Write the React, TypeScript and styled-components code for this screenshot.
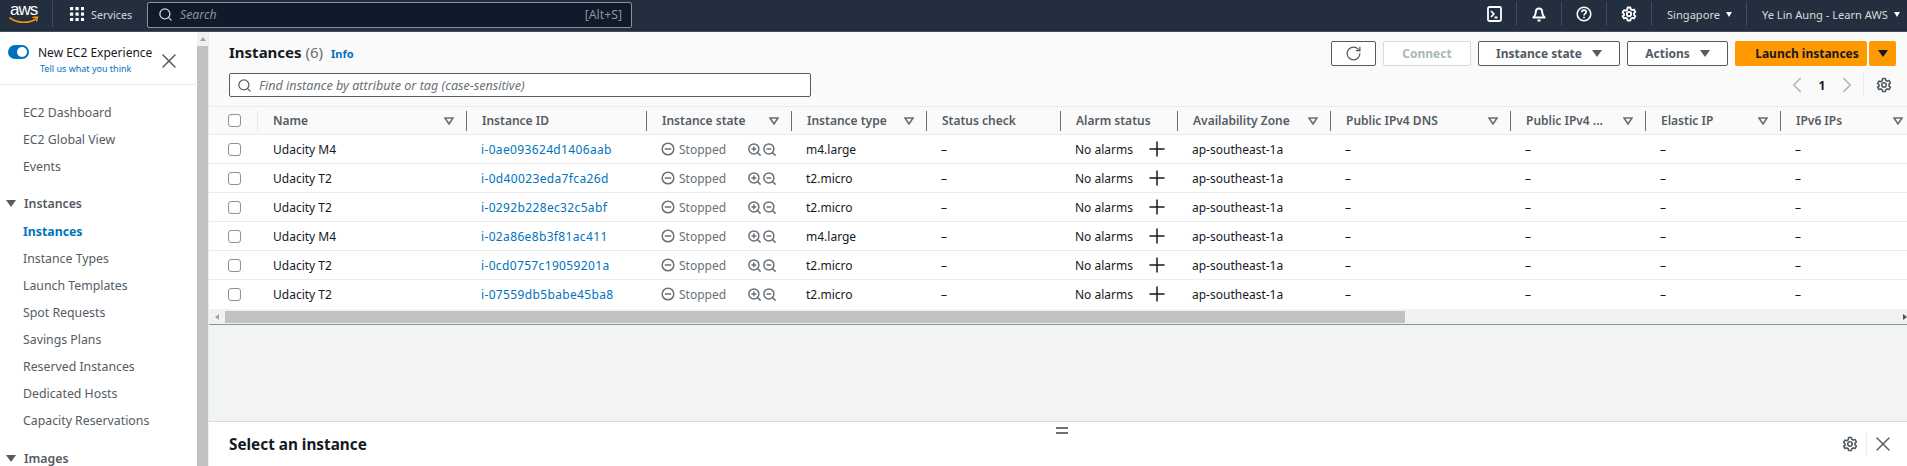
import React from "react";
import styled, { createGlobalStyle } from "styled-components";
import { Search, X, RotateCw, ChevronLeft, ChevronRight, ZoomIn, ZoomOut, Plus } from "lucide-react";

const FONT = `"Noto Sans", "Open Sans", sans-serif`;

const Global = createGlobalStyle`
  html, body { margin: 0; padding: 0; background: #fff; }
  * { box-sizing: border-box; }
  body { font-family: ${FONT}; font-size: 12px; color: #16191f; overflow: hidden; }
`;

const Page = styled.div`
  width: 1907px; height: 466px; display: flex; flex-direction: column; overflow: hidden;
`;

/* top bar */
const TopBar = styled.header`
  height: 32px; flex: none; display: flex; align-items: center; background: #232f3e;
  border-bottom: 1px solid #414d5c; color: #d5dbdb; padding-bottom: 3px;
`;
const Logo = styled.div`
  width: 53px; height: 26px; padding-left: 10px; position: relative; border-right: 1px solid #414d5c;
  color: #fff; font-family: "Liberation Sans", sans-serif; font-size: 17px; line-height: 17px; letter-spacing: -1px;
  svg { position: absolute; left: 9px; top: 15px; }
`;
const ServicesBtn = styled.div`
  display: flex; align-items: center; gap: 7px; margin-left: 17px; width: 77px; font-size: 10.8px; color: #d5dbdb;
`;
const GlobalSearch = styled.div`
  width: 485px; height: 26px; margin-top: 1px; display: flex; align-items: center; padding: 0 9px 0 10px;
  background: #0f1b2a; border: 1px solid #879596; border-radius: 2px; color: #879596;
  em { margin-left: 7px; font-size: 12.3px; }
  span { margin-left: auto; font-size: 12.3px; }
`;
const TopRight = styled.div`
  margin-left: auto; display: flex; align-items: center; height: 26px;
`;
const TopIcon = styled.div`
  width: 45px; height: 24px; display: flex; align-items: center; justify-content: center;
  border-right: 1px solid #414d5c; color: #fff;
`;
const TopMenu = styled.div<{ $w: number; $last?: boolean }>`
  width: ${(p) => p.$w}px; height: 24px; display: flex; align-items: center; gap: 6px; padding-left: 15px;
  border-right: ${(p) => (p.$last ? "none" : "1px solid #414d5c")}; font-size: 11.1px; white-space: nowrap;
`;

/* body */
const Body = styled.div`flex: 1; display: flex; min-height: 0;`;
const Side = styled.aside`
  width: 209px; flex: none; display: flex; background: #fff; border-right: 1px solid #eaeded;
`;
const SideInner = styled.div`width: 197px; flex: none;`;
const Toggle = styled.div`
  height: 53px; position: relative; padding: 13px 0 0 38px; border-bottom: 1px solid #eaeded; margin-right: -1px;
  font-size: 12px; line-height: 16px; color: #16191f; white-space: nowrap;
  a { display: block; font-size: 9px; color: #0073bb; margin-left: 2px; line-height: 16px; margin-top: 0; }
`;
const Switch = styled.div`
  position: absolute; left: 8px; top: 13px; width: 21px; height: 14px; border-radius: 7px; background: #0073bb;
  &::after { content: ""; position: absolute; right: 2px; top: 2px; width: 10px; height: 10px; border-radius: 50%; background: #fff; }
`;
const ToggleClose = styled.div`position: absolute; left: 157px; top: 17px; color: #545b64; display: flex;`;
const Nav = styled.nav`padding-top: 14px;`;
const NavItem = styled.div<{ $active?: boolean }>`
  height: 27px; line-height: 27px; padding-left: 23px; font-size: 12.3px; white-space: nowrap;
  color: ${(p) => (p.$active ? "#0073bb" : "#545b64")}; font-weight: ${(p) => (p.$active ? 700 : 400)};
`;
const NavHead = styled.div<{ $gap: number }>`
  height: 27px; margin-top: ${(p) => p.$gap}px; margin-bottom: 1px; display: flex; align-items: center; gap: 8px; padding-left: 6px;
  font-size: 12.3px; font-weight: 600; color: #545b64;
`;
const VScroll = styled.div`
  width: 11px; flex: none; background: #f1f1f1; display: flex; flex-direction: column; align-items: center;
`;
const VArrow = styled.div`
  width: 0; height: 0; margin: 5px 0 5px; border-left: 3.5px solid transparent; border-right: 3.5px solid transparent;
  border-bottom: 4px solid #a3a3a3;
`;
const VThumb = styled.div`width: 11px; flex: 1; background: #c1c1c1;`;

const Main = styled.main`flex: 1; min-width: 0; display: flex; flex-direction: column; overflow: hidden; background: #f2f3f3;`;
const Panel = styled.section`
  height: 74px; flex: none; background: #fafafa; padding: 9px 11px 0 20px;
`;
const TitleRow = styled.div`display: flex; align-items: center; height: 25px;`;
const Title = styled.h1`
  margin: 0 0 3px; font-size: 15px; font-weight: 700; color: #16191f; white-space: nowrap;
  span { font-weight: 400; color: #687078; }
`;
const InfoLink = styled.a`margin-left: 8px; font-size: 11px; font-weight: 700; color: #0073bb;`;
const Actions = styled.div`margin-left: auto; display: flex; gap: 7px;`;
const Button = styled.div<{ $w: number; $disabled?: boolean }>`
  width: ${(p) => p.$w}px; height: 25px; display: flex; align-items: center; justify-content: center; gap: 10px;
  background: #fff; border: 1px solid ${(p) => (p.$disabled ? "#d5dbdb" : "#545b64")}; border-radius: 2px;
  font-size: 12px; font-weight: 700; color: ${(p) => (p.$disabled ? "#aab7b8" : "#545b64")}; white-space: nowrap;
`;
const Launch = styled.div`
  width: 161px; height: 25px; display: flex; gap: 2px;
  div { background: #ff9900; color: #16191f; font-size: 12px; font-weight: 700; display: flex; align-items: center; justify-content: center; border-radius: 2px; }
  div:first-child { width: 132px; padding-left: 12px; }
  div:last-child { width: 27px; }
`;
const Caret = styled.i<{ $c?: string }>`
  display: inline-block; flex: none; width: 0; height: 0; border-left: 5px solid transparent; border-right: 5px solid transparent;
  border-top: 7px solid ${(p) => p.$c || "#545b64"};
`;
const SmallCaret = styled.i`
  display: inline-block; flex: none; width: 0; height: 0; border-left: 3.5px solid transparent; border-right: 3.5px solid transparent;
  border-top: 5px solid #fff;
`;
const SearchRow = styled.div`display: flex; align-items: center; margin-top: 7px; height: 24px;`;
const FilterBox = styled.div`
  width: 582px; height: 24px; display: flex; align-items: center; gap: 7px; padding-left: 7px; background: #fff;
  border: 1px solid #545b64; border-radius: 2px; color: #687078; font-size: 12.6px; font-style: italic; white-space: nowrap;
  svg { flex: none; }
`;
const Pager = styled.div`
  margin-left: auto; display: flex; align-items: center; height: 24px; color: #16191f; font-weight: 700; font-size: 12px;
`;
const PagerChevron = styled.span`display: flex; color: #aab7b8;`;
const PagerNum = styled.span`width: 24px; text-align: center;`;
const PagerGear = styled.div`
  margin-left: 3px; padding-left: 12px; margin-right: 4px; height: 24px; display: flex; align-items: center; border-left: 1px solid #eaeded; color: #545b64;
`;

const COLS = "49px 208px 180px 145px 135px 134px 117px 153px 180px 135px 135px 135px";
const HeadRow = styled.div`
  display: grid; grid-template-columns: ${COLS}; width: 1698px; height: 29px; align-items: center; flex: none;
  background: #fafafa; border-top: 1px solid #eaeded; border-bottom: 1px solid #eaeded;
`;
const CheckCell = styled.div`padding-left: 19px; height: 20px; display: flex; align-items: center; border-right: 1px solid #eaeded;`;
const Check = styled.span`display: block; width: 13px; height: 13px; background: #fff; border: 1px solid #879596; border-radius: 3px;`;
const HeadCell = styled.div<{ $first?: boolean }>`
  height: 20px; display: flex; align-items: center; padding: 0 12px 0 15px; font-size: 12px; font-weight: 600; color: #545b64;
  white-space: nowrap; border-left: ${(p) => (p.$first ? "none" : "1px solid #687078")};
  svg { margin-left: auto; flex: none; }
`;
const Row = styled.div<{ $last?: boolean }>`
  display: grid; grid-template-columns: ${COLS}; width: 1698px; height: 29px; align-items: center; flex: none; background: #fff;
  border-bottom: 1px solid ${(p) => (p.$last ? "#fff" : "#eaeded")};
`;
const RowCheck = styled.div`padding-left: 19px; display: flex; align-items: center;`;
const Cell = styled.div`padding-left: 15px; font-size: 12px; color: #16191f; white-space: nowrap; display: flex; align-items: center;`;
const IdLink = styled.a`color: #0073bb; letter-spacing: 0.35px;`;
const State = styled.span`display: flex; align-items: center; color: #687078; gap: 4px; width: 86px;`;
const ZoomIcons = styled.span`display: flex; color: #687078;`;
const Alarm = styled.span`width: 70px;`;
const HScroll = styled.div`
  height: 16px; flex: none; display: flex; align-items: center; background: #f1f1f1;
  border-bottom: 1px solid #879596; width: 100%;
`;
const HArrowL = styled.div`
  width: 0; height: 0; margin-left: 6px; border-top: 3.5px solid transparent; border-bottom: 3.5px solid transparent; border-right: 4px solid #a3a3a3;
`;
const HThumb = styled.div`height: 12px; width: 1180px; margin-left: 6px; background: #c1c1c1;`;
const HArrowR = styled.div`
  width: 0; height: 0; margin-left: auto; margin-right: 0; border-top: 3.5px solid transparent; border-bottom: 3.5px solid transparent; border-left: 4px solid #505050;
`;
const Gutter = styled.div`flex: 1; min-height: 0; background: #f2f3f3;`;
const Split = styled.section`
  height: 45px; flex: none; background: #fff; border-top: 1px solid #d5dbdb; display: flex; align-items: center;
  padding: 0 12px 0 20px; position: relative;
`;
const SplitTitle = styled.h2`margin: 0; font-size: 15.3px; font-weight: 700; color: #16191f;`;
const Handle = styled.div`
  position: absolute; left: 847px; top: 5px; width: 12px; height: 7px; border-top: 2px solid #687078; border-bottom: 2px solid #687078;
`;
const SplitTools = styled.div`
  margin-left: auto; display: flex; align-items: center; color: #545b64;
  span { display: block; height: 24px; margin: 0 4px 0 8px; border-left: 1px solid #eaeded; }
`;

const FilterIcon = () => (
  <svg width="10" height="8" viewBox="0 0 10 8" fill="none" stroke="#687078" strokeWidth="1.6">
    <path d="M1 1h8L5 7z" />
  </svg>
);
const Gear = ({ size = 16, color = "currentColor", w = 1.6 }: { size?: number; color?: string; w?: number }) => (
  <svg width={size} height={size} viewBox="0 0 16 16" fill="none" stroke={color} strokeWidth={w}>
    <circle cx="8" cy="8" r="2.2" />
    <path d="M6.600 1.500h2.800l.4 1.800 1.400.8 1.800-.6 1.400 2.400-1.400 1.300v1.600l1.400 1.300-1.400 2.400-1.800-.6-1.400.8-.4 1.800H6.600l-.4-1.800-1.400-.8-1.800.6-1.400-2.400L3 9.500V7.900L1.600 6.500 3 4.100l1.800.6 1.400-.8z" strokeLinejoin="round" />
  </svg>
);
const StoppedIcon = () => (
  <svg width="14" height="14" viewBox="0 0 14 14" fill="none" stroke="#687078" strokeWidth="1.5">
    <circle cx="7" cy="7" r="5.800" />
    <path d="M3.800 7h6.400" />
  </svg>
);
const Squares = () => (
  <svg width="14" height="14" viewBox="0 0 14 14" fill="#fff">
    {[0, 5.5, 11].flatMap((y) => [0, 5.5, 11].map((x) => <rect key={`${x}-${y}`} x={x} y={y} width="3.2" height="3.2" />))}
  </svg>
);
const Smile = () => (
  <svg width="30" height="10" viewBox="0 0 30 10" fill="none">
    <path d="M1 2c7 5 18 6 26 1" stroke="#ff9900" strokeWidth="1.600" strokeLinecap="round" />
    <path d="M24 1.500l4.500-.5-.8 4" stroke="#ff9900" strokeWidth="1.300" strokeLinecap="round" />
  </svg>
);
const ShellIcon = () => (
  <svg width="15" height="16" viewBox="0 0 15 16" fill="none" stroke="#fff" strokeWidth="1.800">
    <rect x="1" y="1" width="13" height="14" rx="1.500" />
    <path d="M4 5l2.800 3L4 11M7.500 11.500h3" />
  </svg>
);
const BellIcon = () => (
  <svg width="16" height="16" viewBox="0 0 16 16" fill="none" stroke="#fff" strokeWidth="2" strokeLinejoin="round">
    <path d="M8 2.500c-2.400 0-3.200 1.800-3.200 3.800 0 2.300-1 3.800-2.400 5.200h11.200c-1.400-1.400-2.400-2.900-2.400-5.200 0-2-.8-3.800-3.200-3.800z" />
    <path d="M6.500 14.500h3" />
  </svg>
);
const HelpIcon = () => (
  <svg width="16" height="16" viewBox="0 0 16 16" fill="none" stroke="#fff" strokeWidth="1.600">
    <circle cx="8" cy="8" r="6.800" />
    <path d="M5.800 6.200c0-1.300 1-2.100 2.200-2.100 1.300 0 2.200.8 2.200 1.900 0 1.700-2.200 1.700-2.200 3.500" />
    <path d="M8 10.800v1.500" />
  </svg>
);

const columns: { label: string; filter: boolean }[] = [
  { label: "Name", filter: true },
  { label: "Instance ID", filter: false },
  { label: "Instance state", filter: true },
  { label: "Instance type", filter: true },
  { label: "Status check", filter: false },
  { label: "Alarm status", filter: false },
  { label: "Availability Zone", filter: true },
  { label: "Public IPv4 DNS", filter: true },
  { label: "Public IPv4 ...", filter: true },
  { label: "Elastic IP", filter: true },
  { label: "IPv6 IPs", filter: true },
];
const rows = [
  ["Udacity M4", "i-0ae093624d1406aab", "m4.large"],
  ["Udacity T2", "i-0d40023eda7fca26d", "t2.micro"],
  ["Udacity T2", "i-0292b228ec32c5abf", "t2.micro"],
  ["Udacity M4", "i-02a86e8b3f81ac411", "m4.large"],
  ["Udacity T2", "i-0cd0757c19059201a", "t2.micro"],
  ["Udacity T2", "i-07559db5babe45ba8", "t2.micro"],
];

export default function App() {
  return (
    <Page>
      <Global />
      <TopBar>
        <Logo>aws<Smile /></Logo>
        <ServicesBtn><Squares />Services</ServicesBtn>
        <GlobalSearch>
          <Search size={15} color="#d5dbdb" strokeWidth={2} />
          <em>Search</em>
          <span>[Alt+S]</span>
        </GlobalSearch>
        <TopRight>
          <TopIcon><ShellIcon /></TopIcon>
          <TopIcon><BellIcon /></TopIcon>
          <TopIcon><HelpIcon /></TopIcon>
          <TopIcon><Gear color="#fff" w={1.8} /></TopIcon>
          <TopMenu $w={95}>Singapore <SmallCaret /></TopMenu>
          <TopMenu $w={160} $last>Ye Lin Aung - Learn AWS <SmallCaret /></TopMenu>
        </TopRight>
      </TopBar>
      <Body>
        <Side>
          <SideInner>
            <Toggle>
              <Switch />
              New EC2 Experience
              <a>Tell us what you think</a>
              <ToggleClose><X size={24} strokeWidth={1.5} /></ToggleClose>
            </Toggle>
            <Nav>
              <NavItem>EC2 Dashboard</NavItem>
              <NavItem>EC2 Global View</NavItem>
              <NavItem>Events</NavItem>
              <NavHead $gap={10}><Caret $c="#545b64" />Instances</NavHead>
              <NavItem $active>Instances</NavItem>
              <NavItem>Instance Types</NavItem>
              <NavItem>Launch Templates</NavItem>
              <NavItem>Spot Requests</NavItem>
              <NavItem>Savings Plans</NavItem>
              <NavItem>Reserved Instances</NavItem>
              <NavItem>Dedicated Hosts</NavItem>
              <NavItem>Capacity Reservations</NavItem>
              <NavHead $gap={11}><Caret $c="#545b64" />Images</NavHead>
            </Nav>
          </SideInner>
          <VScroll><VArrow /><VThumb /></VScroll>
        </Side>
        <Main>
          <Panel>
            <TitleRow>
              <Title>Instances <span>(6)</span></Title>
              <InfoLink>Info</InfoLink>
              <Actions>
                <Button $w={45}><RotateCw size={17} strokeWidth={1.7} /></Button>
                <Button $w={88} $disabled>Connect</Button>
                <Button $w={142}>Instance state <Caret /></Button>
                <Button $w={101}>Actions <Caret /></Button>
                <Launch><div>Launch instances</div><div><Caret $c="#16191f" /></div></Launch>
              </Actions>
            </TitleRow>
            <SearchRow>
              <FilterBox><Search size={15} color="#545b64" strokeWidth={2} />Find instance by attribute or tag (case-sensitive)</FilterBox>
              <Pager>
                <PagerChevron><ChevronLeft size={26} strokeWidth={1.5} /></PagerChevron>
                <PagerNum>1</PagerNum>
                <PagerChevron><ChevronRight size={26} strokeWidth={1.5} /></PagerChevron>
                <PagerGear><Gear /></PagerGear>
              </Pager>
            </SearchRow>
          </Panel>
          <HeadRow>
            <CheckCell><Check /></CheckCell>
            {columns.map((c, i) => (
              <HeadCell key={c.label} $first={i === 0}>
                {c.label}
                {c.filter && <FilterIcon />}
              </HeadCell>
            ))}
          </HeadRow>
          {rows.map((r, i) => (
            <Row key={r[1]} $last={i === rows.length - 1}>
              <RowCheck><Check /></RowCheck>
              <Cell>{r[0]}</Cell>
              <Cell><IdLink>{r[1]}</IdLink></Cell>
              <Cell>
                <State><StoppedIcon />Stopped</State>
                <ZoomIcons><ZoomIn size={15} strokeWidth={2.4} /><ZoomOut size={15} strokeWidth={2.4} /></ZoomIcons>
              </Cell>
              <Cell>{r[2]}</Cell>
              <Cell>–</Cell>
              <Cell><Alarm>No alarms</Alarm><Plus size={24} strokeWidth={1.5} /></Cell>
              <Cell>ap-southeast-1a</Cell>
              <Cell>–</Cell>
              <Cell>–</Cell>
              <Cell>–</Cell>
              <Cell>–</Cell>
            </Row>
          ))}
          <HScroll><HArrowL /><HThumb /><HArrowR /></HScroll>
          <Gutter />
          <Split>
            <SplitTitle>Select an instance</SplitTitle>
            <Handle />
            <SplitTools><Gear /><span /><X size={24} strokeWidth={1.4} /></SplitTools>
          </Split>
        </Main>
      </Body>
    </Page>
  );
}
